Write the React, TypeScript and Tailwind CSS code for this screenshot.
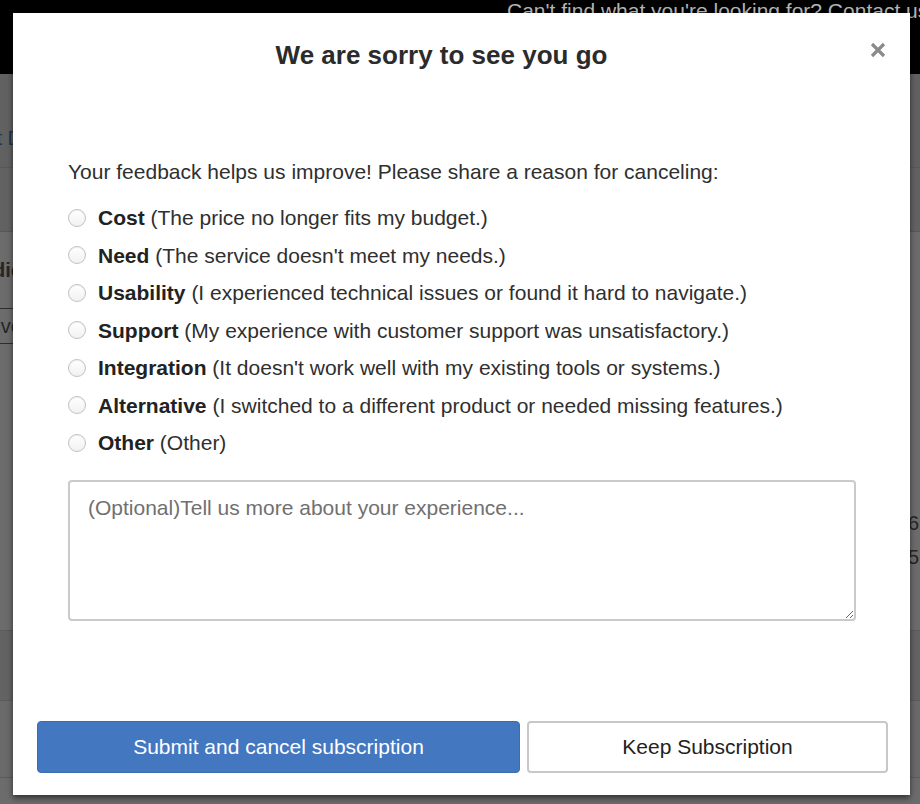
const reasons = [
  { label: "Cost", detail: "(The price no longer fits my budget.)" },
  { label: "Need", detail: "(The service doesn't meet my needs.)" },
  { label: "Usability", detail: "(I experienced technical issues or found it hard to navigate.)" },
  { label: "Support", detail: "(My experience with customer support was unsatisfactory.)" },
  { label: "Integration", detail: "(It doesn't work well with my existing tools or systems.)" },
  { label: "Alternative", detail: "(I switched to a different product or needed missing features.)" },
  { label: "Other", detail: "(Other)" },
];

function BackdropPage() {
  return (
    <div className="flex h-[804px] w-full flex-col overflow-hidden bg-[#6c6c6c]">
      <div className="h-[74px] shrink-0 overflow-hidden whitespace-nowrap bg-black pl-[507px] text-[21px] leading-none text-[#b4b4b4]">
        Can't find what you're looking for? Contact us
      </div>
      <div className="flex h-[94px] shrink-0 items-start border-b border-[#585858] bg-[#616161] pt-[54px]">
        <div className="flex w-[22px] justify-end overflow-hidden whitespace-nowrap text-[20px] leading-5 text-[#1d3557]">
          Contact D
        </div>
      </div>
      <div className="h-[64px] shrink-0 border-b border-[#585858] bg-[#626262]" />
      <div className="flex h-[76px] shrink-0 items-center">
        <div className="flex w-[22px] justify-end overflow-hidden whitespace-nowrap text-[20px] font-bold text-[#262626]">
          Medic
        </div>
      </div>
      <div className="flex h-[36px] w-[40px] shrink-0 items-center border-y border-[#2e2e2e]">
        <div className="flex w-[22px] justify-end overflow-hidden whitespace-nowrap text-[20px] text-[#262626]">
          Archive
        </div>
      </div>
      <div className="flex h-[286px] shrink-0 flex-col items-end justify-start gap-[14px] pt-[169px]">
        <div className="w-[12px] overflow-hidden whitespace-nowrap text-[20px] leading-5 text-[#262626]">6</div>
        <div className="w-[12px] overflow-hidden whitespace-nowrap text-[20px] leading-5 text-[#262626]">5</div>
      </div>
      <div className="h-[70px] shrink-0 border-t border-[#5b5b5b] bg-[#636363]" />
      <div className="h-[77px] shrink-0 border-t border-[#5b5b5b] bg-[#6a6a6a]" />
      <div className="flex-1 border-t border-[#5b5b5b]" />
    </div>
  );
}

function Radio() {
  return (
    <span className="h-[18px] w-[18px] shrink-0 rounded-full border border-[#c2c2c2] bg-gradient-to-b from-white to-[#f1f1f1] shadow-[inset_0_1px_1px_rgba(0,0,0,0.06)]" />
  );
}

export default function App() {
  return (
    <div className="relative font-['Liberation_Sans',Arial,sans-serif]">
      <BackdropPage />
      <div className="absolute left-[13px] top-[13px] flex h-[782px] w-[897px] flex-col bg-white shadow-[0_3px_6px_rgba(0,0,0,0.55)]">
        <div className="flex h-[84px] shrink-0 items-center pr-[24px]">
          <h2 className="flex-1 text-center text-[26px] font-bold leading-8 text-[#2b2b2b]">
            We are sorry to see you go
          </h2>
          <button type="button" aria-label="Close" className="-mt-[10px] text-[#8a8a8a]">
            <svg width="16" height="16" viewBox="0 0 16 16">
              <path d="M2 2 L14 14 M14 2 L2 14" stroke="currentColor" strokeWidth="3.2" strokeLinecap="butt" />
            </svg>
          </button>
        </div>

        <div className="flex flex-col px-[55px]">
          <p className="mt-[63px] text-[21px] leading-6 text-[#2f2f2f]">
            Your feedback helps us improve! Please share a reason for canceling:
          </p>
          <div className="mt-[15px] flex flex-col">
            {reasons.map((r) => (
              <label key={r.label} className="flex h-[37.5px] items-center gap-[12px] text-[21px] text-[#2f2f2f]">
                <Radio />
                <span>
                  <b className="font-bold text-[#222]">{r.label}</b> {r.detail}
                </span>
              </label>
            ))}
          </div>
          <textarea
            className="mt-[18px] h-[141px] w-[788px] resize-y rounded-[4px] border-2 border-[#cacaca] px-[18px] pb-[12px] pt-[14px] text-[21px] leading-6 text-[#333] placeholder:text-[#707070] focus:outline-none"
            placeholder="(Optional)Tell us more about your experience..."
          />
        </div>

        <div className="mt-auto flex gap-[7px] pb-[22px] pl-[24px] pr-[22px]">
          <button
            type="button"
            className="h-[52px] w-[483px] rounded-[4px] border border-[#3a6db3] bg-[#4378c1] text-[21px] text-white"
          >
            Submit and cancel subscription
          </button>
          <button
            type="button"
            className="h-[52px] flex-1 rounded-[4px] border-2 border-[#c8c8c8] bg-white text-[21px] text-[#222]"
          >
            Keep Subscription
          </button>
        </div>
      </div>
    </div>
  );
}
